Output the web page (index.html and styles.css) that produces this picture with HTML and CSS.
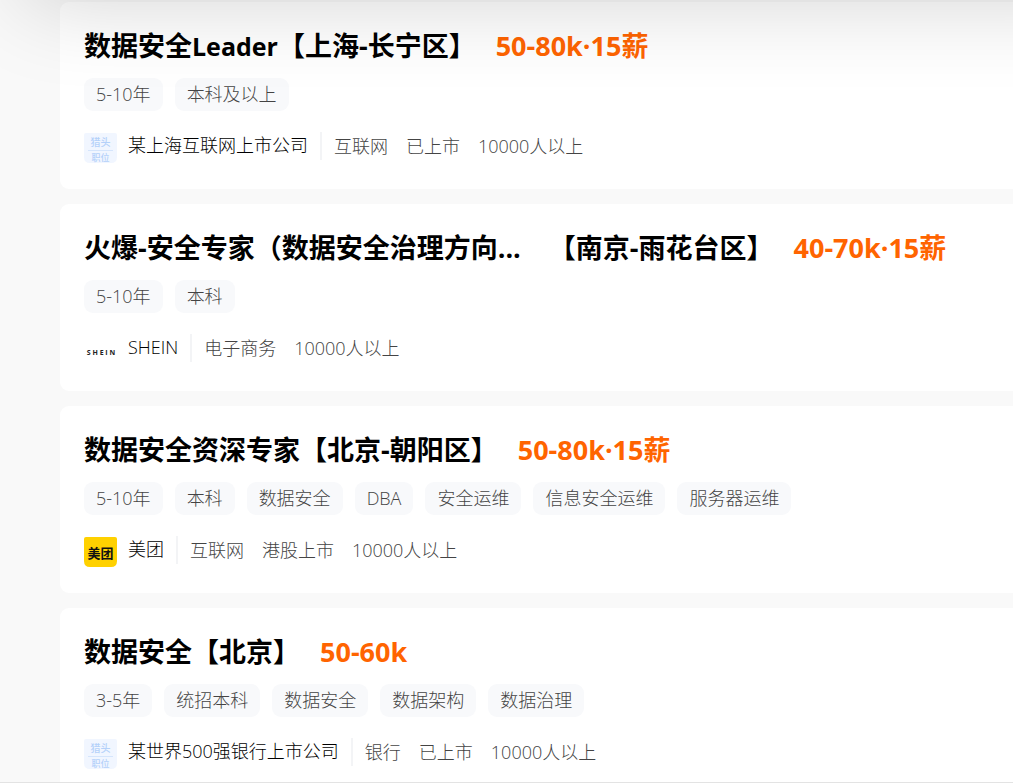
FILE: index.html
```
<!DOCTYPE html>
<html lang="zh-CN">
<head>
<meta charset="utf-8">
<meta name="viewport" content="width=device-width, initial-scale=1">
<title>数据安全职位</title>
<link rel="stylesheet" href="styles.css">
</head>
<body>
<div class="topbar-shadow" aria-hidden="true"></div>
<main class="job-list">
  <article class="job-card">
    <h2 class="job-head"><span class="job-title">数据安全<span class="latin">Leader</span></span><span class="job-area">【上海-长宁区】</span><span class="job-salary">50-80k·15薪</span></h2>
    <ul class="tags"><li>5-10年</li><li>本科及以上</li></ul>
    <div class="company">
      <svg class="logo" viewBox="0 0 33 30" aria-hidden="true"><path class="hunter-bg" d="M2 0H31Q33 0 33 2V24Q33 30 27 30H6Q0 30 0 24V2Q0 0 2 0Z"/><text class="hunter-text" x="16.5" y="13">猎头</text><path class="hunter-line" d="M4 17.500H29"/><text class="hunter-text hunter-small" x="16.500" y="28">职位</text></svg>
      <span class="company-name">某上海互联网上市公司</span>
      <ul class="facts"><li>互联网</li><li>已上市</li><li>10000人以上</li></ul>
    </div>
  </article>

  <article class="job-card">
    <h2 class="job-head"><span class="job-title job-title-cut">火爆-安全专家（数据安全治理方向...</span><span class="job-area">【南京-雨花台区】</span><span class="job-salary">40-70k·15薪</span></h2>
    <ul class="tags"><li>5-10年</li><li>本科</li></ul>
    <div class="company">
      <svg class="logo" viewBox="0 0 33 30" aria-hidden="true"><text class="shein-text" x="17" y="20">S H E I N</text></svg>
      <span class="company-name">SHEIN</span>
      <ul class="facts"><li>电子商务</li><li>10000人以上</li></ul>
    </div>
  </article>

  <article class="job-card">
    <h2 class="job-head"><span class="job-title">数据安全资深专家</span><span class="job-area">【北京-朝阳区】</span><span class="job-salary">50-80k·15薪</span></h2>
    <ul class="tags"><li>5-10年</li><li>本科</li><li>数据安全</li><li>DBA</li><li>安全运维</li><li>信息安全运维</li><li>服务器运维</li></ul>
    <div class="company">
      <svg class="logo" viewBox="0 0 33 30" aria-hidden="true"><path class="meituan-bg" d="M2 0H31Q33 0 33 2V24Q33 30 27 30H6Q0 30 0 24V2Q0 0 2 0Z"/><text class="meituan-text" x="16.5" y="21">美团</text></svg>
      <span class="company-name">美团</span>
      <ul class="facts"><li>互联网</li><li>港股上市</li><li>10000人以上</li></ul>
    </div>
  </article>

  <article class="job-card">
    <h2 class="job-head"><span class="job-title">数据安全</span><span class="job-area">【北京】</span><span class="job-salary">50-60k</span></h2>
    <ul class="tags"><li>3-5年</li><li>统招本科</li><li>数据安全</li><li>数据架构</li><li>数据治理</li></ul>
    <div class="company">
      <svg class="logo" viewBox="0 0 33 30" aria-hidden="true"><path class="hunter-bg" d="M2 0H31Q33 0 33 2V24Q33 30 27 30H6Q0 30 0 24V2Q0 0 2 0Z"/><text class="hunter-text" x="16.5" y="13">猎头</text><path class="hunter-line" d="M4 17.500H29"/><text class="hunter-text hunter-small" x="16.500" y="28">职位</text></svg>
      <span class="company-name">某世界500强银行上市公司</span>
      <ul class="facts"><li>银行</li><li>已上市</li><li>10000人以上</li></ul>
    </div>
  </article>
</main>
<div class="bottom-edge" aria-hidden="true"></div>
</body>
</html>
```
FILE: styles.css
```
* { box-sizing: border-box; }

html { overflow: hidden; }

body {
  margin: 0;
  background: #f9f9f9;
  color: #000;
  font-family: "Open Sans", "Noto Sans CJK SC", sans-serif;
}

ul { list-style: none; margin: 0; padding: 0; }

/* soft shadow cast by the sticky bar above the list */
.topbar-shadow {
  position: fixed;
  top: -100px;
  left: 24px;
  right: -100px;
  height: 100px;
  box-shadow: 0 0 90px rgba(0, 0, 0, 0.18);
  pointer-events: none;
}

.job-list {
  display: flex;
  flex-direction: column;
  gap: 15px;
  padding: 2px 0 0 60px;
}

.job-card {
  display: flex;
  flex-direction: column;
  padding: 24px 24px 25px;
  background: #fff;
  border-radius: 9px 0 0 9px;
}

.job-head {
  display: flex;
  align-items: center;
  margin: 0 0 12px;
  font-size: 27px;
  line-height: 40px;
  font-weight: 700;
  white-space: nowrap;
}

.latin { font-size: 25px; }

.job-title-cut { margin-right: 28px; }

.job-salary {
  margin-left: 20px;
  color: #ff6400;
}

.tags {
  display: flex;
  flex-wrap: wrap;
  gap: 12px;
  margin-bottom: 17px;
}

.tags li {
  padding: 0 12px;
  background: #f8f9fb;
  border-radius: 9px;
  color: #444;
  font-size: 18px;
  font-weight: 300;
  line-height: 33px;
}

.company {
  display: flex;
  align-items: center;
  height: 36px;
  font-size: 18px;
  line-height: 28px;
  font-weight: 300;
  white-space: nowrap;
}

.company-name { padding-bottom: 2px; }

.logo {
  width: 33px;
  height: 30px;
  margin: 3px 11px 0 0;
  flex: none;
}

.facts {
  display: flex;
  gap: 18px;
  margin-left: 12px;
  padding-left: 12px;
  border-left: 2px solid #f3f4f6;
  color: #444;
}

.logo text {
  text-anchor: middle;
  font-family: "Noto Sans CJK SC", sans-serif;
}

.hunter-bg { fill: #f1f6ff; }
.hunter-line { stroke: #d5e5fc; stroke-width: 1; }
.logo .hunter-text { fill: #b4d1fa; font-size: 10px; font-weight: 500; }
.logo .hunter-small { font-size: 9px; }
.meituan-bg { fill: #ffd100; }
.logo .meituan-text { fill: #111; font-size: 13px; font-weight: 700; }
.logo .shein-text { fill: #222; font-family: "Open Sans", sans-serif; font-size: 7px; font-weight: 700; }

.bottom-edge {
  position: fixed;
  left: 0;
  right: 0;
  bottom: 0;
  height: 1px;
  background: #e3e3e3;
}
```
